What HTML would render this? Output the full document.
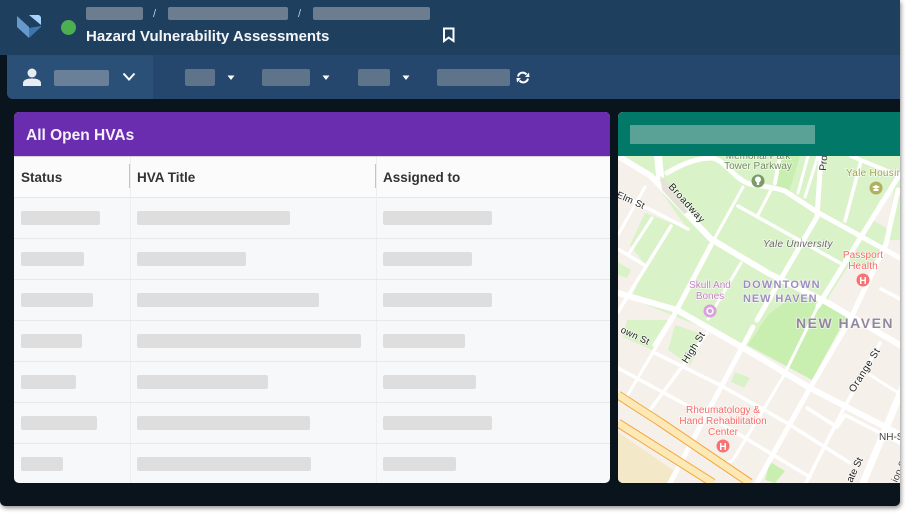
<!DOCTYPE html>
<html>
<head>
<meta charset="utf-8">
<style>
html,body{margin:0;padding:0;width:908px;height:514px;background:#fff;overflow:hidden;font-family:"Liberation Sans",sans-serif}
div{position:absolute;box-sizing:border-box}
#frame{left:0;top:0;width:900px;height:506px;background:#0a141d;border-radius:0 0 5px 5px;box-shadow:1px 2px 5px rgba(0,0,0,.45);overflow:hidden}
#top{left:0;top:0;width:900px;height:55px;background:#1f3f5f}
.crumb{background:#6c7d90;height:13px;top:7px;border-radius:2px}
.sl{top:8px;color:#c5ced8;font-size:11px}
#title{left:86px;top:28px;color:#f4f6f8;font-size:15px;font-weight:bold;white-space:nowrap;letter-spacing:-.02px}
#nav{left:7px;top:55px;width:893px;height:44px;background:#25476d;border-radius:0 0 0 6px}
#usr{left:7px;top:55px;width:146px;height:44px;background:#2a5078;border-radius:0 0 0 6px}
.nb{background:#5f738b;top:69px;height:17px;border-radius:2px}
#pur{left:14px;top:112px;width:596px;height:371px;background:#f7f8fa;border-radius:5px;overflow:hidden}
#ph{left:0;top:0;width:596px;height:44px;background:#6a2db0}
#ph span{position:absolute;left:12px;top:15px;color:#f6f2fb;font-size:15.5px;font-weight:bold;white-space:nowrap}
#th{left:0;top:44px;width:596px;height:42px;background:#fbfbfb;border-top:1px solid #d6d3d9;border-bottom:1px solid #e5e6e8}
.h{top:58px;font-size:13.5px;font-weight:bold;color:#333;white-space:nowrap}
.r{left:0;width:596px;height:1px;background:#e7e8ea}
.v{width:1px;top:45px;height:326px;background:#eceef0}
.vh{width:1px;top:52px;height:24px;background:#c4c4c4}
.b{height:14px;background:#dedede;border-radius:2px}
#grn{left:618px;top:112px;width:282px;height:371px;border-radius:5px 0 0 5px;overflow:hidden;background:#f5f0ea}
#gh{left:0;top:0;width:282px;height:44px;background:#017868}
#gb{left:12px;top:13px;width:185px;height:19px;background:#5aa196}
svg{position:absolute}
</style>
</head>
<body>
<div id="frame">
  <div id="top"></div>
  <svg style="left:0;top:0" width="60" height="55">
    <polygon points="17,16 29,27 29,38 17,27" fill="#6699cc"/>
    <polygon points="29,28 41,26 41,27 29,38" fill="#3f76ab"/>
    <polygon points="29,15 39,15 41,17 41,25" fill="#a6d3fc"/>
  </svg>
  <svg style="left:60px;top:19px" width="18" height="18"><circle cx="8.5" cy="8.5" r="7.5" fill="#4caf50"/></svg>
  <div class="crumb" style="left:86px;width:57px"></div>
  <div class="sl" style="left:153px">/</div>
  <div class="crumb" style="left:168px;width:120px"></div>
  <div class="sl" style="left:298px">/</div>
  <div class="crumb" style="left:313px;width:117px"></div>
  <div id="title">Hazard Vulnerability Assessments</div>
  <svg style="left:442px;top:27px" width="14" height="17"><path d="M2 1.5H11.5V14L6.7 10.6 2 14Z" fill="none" stroke="#fff" stroke-width="2"/></svg>

  <div id="nav"></div>
  <div id="usr"></div>
  <svg style="left:22px;top:67px" width="20" height="20">
    <circle cx="10" cy="6" r="4.5" fill="#e8ecf0"/>
    <path d="M1 19V16.5C1 13 4.5 11.5 10 11.5S19 13 19 16.5V19Z" fill="#e8ecf0"/>
  </svg>
  <div class="nb" style="left:54px;top:70px;width:55px;height:16px;background:#6a8099"></div>
  <svg style="left:122px;top:71px" width="15" height="12"><path d="M1.5 2.5L7 8.5 12.5 2.5" fill="none" stroke="#fff" stroke-width="2"/></svg>
  <div class="nb" style="left:185px;width:30px"></div>
  <svg style="left:227px;top:75px" width="9" height="6"><polygon points="0.5,0.5 7.5,0.5 4,5" fill="#fff"/></svg>
  <div class="nb" style="left:262px;width:48px"></div>
  <svg style="left:322px;top:75px" width="9" height="6"><polygon points="0.5,0.5 7.5,0.5 4,5" fill="#fff"/></svg>
  <div class="nb" style="left:358px;width:32px"></div>
  <svg style="left:402px;top:75px" width="9" height="6"><polygon points="0.5,0.5 7.5,0.5 4,5" fill="#fff"/></svg>
  <div class="nb" style="left:437px;width:73px"></div>
  <svg style="left:516px;top:71px" width="14" height="13">
    <path d="M2 5.5A4.8 4.8 0 0 1 10.5 3.5M12 7.5A4.8 4.8 0 0 1 3.5 9.5" fill="none" stroke="#fff" stroke-width="2"/>
    <polygon points="9,6 13.5,6 13,1.5" fill="#fff"/><polygon points="0.5,7 5,7 1,11.5" fill="#fff"/>
  </svg>

  <div id="pur">
    <div id="ph"><span>All Open HVAs</span></div>
    <div id="th"></div>
    <div class="h" style="left:7px">Status</div>
    <div class="h" style="left:123px">HVA Title</div>
    <div class="h" style="left:369px">Assigned to</div>
    <div class="v" style="left:116px"></div><div class="v" style="left:362px"></div>
    <div class="vh" style="left:115px"></div><div class="vh" style="left:361px"></div>
    <div class="r" style="top:126px"></div><div class="r" style="top:167px"></div><div class="r" style="top:208px"></div>
    <div class="r" style="top:249px"></div><div class="r" style="top:290px"></div><div class="r" style="top:331px"></div>

    <div class="b" style="left:7px;top:99px;width:79px"></div><div class="b" style="left:123px;top:99px;width:153px"></div><div class="b" style="left:369px;top:99px;width:109px"></div>
    <div class="b" style="left:7px;top:140px;width:63px"></div><div class="b" style="left:123px;top:140px;width:109px"></div><div class="b" style="left:369px;top:140px;width:89px"></div>
    <div class="b" style="left:7px;top:181px;width:72px"></div><div class="b" style="left:123px;top:181px;width:182px"></div><div class="b" style="left:369px;top:181px;width:109px"></div>
    <div class="b" style="left:7px;top:222px;width:61px"></div><div class="b" style="left:123px;top:222px;width:224px"></div><div class="b" style="left:369px;top:222px;width:82px"></div>
    <div class="b" style="left:7px;top:263px;width:55px"></div><div class="b" style="left:123px;top:263px;width:131px"></div><div class="b" style="left:369px;top:263px;width:93px"></div>
    <div class="b" style="left:7px;top:304px;width:76px"></div><div class="b" style="left:123px;top:304px;width:173px"></div><div class="b" style="left:369px;top:304px;width:109px"></div>
    <div class="b" style="left:7px;top:345px;width:42px"></div><div class="b" style="left:123px;top:345px;width:174px"></div><div class="b" style="left:369px;top:345px;width:73px"></div>
  </div>

  <div id="grn">
    <svg style="left:0;top:0" width="282" height="371" viewBox="618 112 282 371">
      <rect x="618" y="112" width="282" height="371" fill="#f5f0ea"/>
      <polygon points="655,156 900,156 900,240 888,240 871,268 848,266 825,303 848,314 812,380 750,347 618,293 618,156" fill="#d9f2c8"/>
      <polygon points="618,156 651,176 678,216 688,229 645,213 630,245 646,266 630,300 618,293" fill="#f5f0ea"/>
      <polygon points="618,262 631,270 627,278 618,275" fill="#d9f2c8"/>
      <polygon points="880,200 894,190 888,229 871,219" fill="#f5f0ea"/>
      <polygon points="627,320 670,320 652,350 623,337" fill="#d9f2c8"/>
      <polygon points="675,325 705,335 690,365 668,350" fill="#d9f2c8"/>
      <polygon points="748,345 768,315 797,293 848,314 812,380" fill="#c9efb0"/>
      <polygon points="780,156 800,156 789,192 776,187" fill="#c9efb0"/>
      <polygon points="735,372 750,378 744,388 731,382" fill="#d9f2c8"/>
      <polygon points="770,462 785,471 775,483 765,480" fill="#c9efb0"/>
      <polygon points="618,432 677,473 670,483 618,483" fill="#f3e8c8"/>

      <g fill="none" stroke="#fff" stroke-width="5" stroke-linecap="round" stroke-linejoin="round">
        <path d="M618 156L651 176 711 239 768 273 828 303 900 345" stroke-width="6"/>
        <path d="M658 156L660 176" stroke-width="8"/>
        <path d="M667 173C685 162 700 158 712 158C725 160 735 180 750 184C765 187 775 187 785 191L817 212 900 258"/>
        <path d="M618 293L677 310 747 350 810 388 897 433" stroke-width="6"/>
        <path d="M743 187L711 245" stroke-width="3"/>
        <path d="M711 245L673 317 655 345"/>
        <path d="M757 320L817 217 821 156"/>
        <path d="M900 174L818 306" stroke-width="5"/>
        <path d="M818 306L783 377" stroke-width="3"/>
        <path d="M898 190L886 244 850 320 810 388 757 483"/>
        <path d="M753 327L670 483"/>
        <path d="M851 156L900 176" stroke-width="4"/>
        <path d="M783 377L733 460 727 463" stroke-width="3"/>
        <path d="M618 249L646 266" stroke-width="3.5"/>
        <path d="M672 320L623 403" stroke-width="3"/>
        <path d="M741 263L708 319" stroke-width="3"/>
        <path d="M707 333L650 410" stroke-width="3.5"/>
        <path d="M618 193L688 229" stroke-width="3.5"/>
        <path d="M645 187L618 235" stroke-width="3"/>
        <path d="M652 218L628 255" stroke-width="3"/>
        <path d="M671 226L618 312" stroke-width="3.5"/>
        <path d="M738 206L840 263" stroke-width="3.5"/>
        <path d="M881 289L900 299" stroke-width="3.5"/>
        <path d="M772 188L757 217" stroke-width="3"/>
        <path d="M780 156L775 183" stroke-width="4"/>
        <path d="M808 156L798 193" stroke-width="3"/>
        <path d="M818 156L805 197" stroke-width="3"/>
        <path d="M861 161L845 221" stroke-width="3.5"/>
        <path d="M653 352L720 385 787 423 850 463" stroke-width="3.5"/>
        <path d="M618 368L727 427 770 453 810 477" stroke-width="3.5"/>
        <path d="M807 408L837 427 845 415 900 443" stroke-width="3.5"/>
        <path d="M880 343L843 410 806 483" stroke-width="3.5"/>
        <path d="M903 387L863 483" stroke-width="7"/>
        <path d="M870 375L897 392" stroke-width="3"/>
      </g>
      <polygon points="660,176 666,180 688,212 684,214 662,190" fill="#e5e3d8"/>
      <g fill="none" stroke-linejoin="round">
        <path d="M618 395L660 422 750 483" stroke="#f4a640" stroke-width="9"/>
        <path d="M618 395L660 422 750 483" stroke="#fde9b5" stroke-width="7"/>
        <path d="M618 423L713 483" stroke="#f4a640" stroke-width="9"/>
        <path d="M618 423L713 483" stroke="#fde9b5" stroke-width="7"/>
      </g>
      <g font-family="'Liberation Sans',sans-serif" stroke="#fff" stroke-width="1.5" stroke-opacity=".7" paint-order="stroke">
        <text x="758" y="159" font-size="10" fill="#6f8a5c" text-anchor="middle">Memorial Park</text>
        <text x="758" y="169" font-size="10" fill="#6f8a5c" text-anchor="middle">Tower Parkway</text>
        <circle cx="758" cy="181" r="6.5" fill="#7c9a68" stroke="none"/><rect x="756.8" y="181" width="2.4" height="4" fill="#fff" stroke="none"/><circle cx="758" cy="179.5" r="3" fill="#fff" stroke="none"/>
        <text x="846" y="176" font-size="10" fill="#a0a050" letter-spacing=".3">Yale Housing</text>
        <circle cx="876" cy="188" r="6.5" fill="#b0b060" stroke="none"/><path d="M872 187L876 185 880 187 876 189ZM873.5 189H878.5V191H873.5Z" fill="#fff" stroke="none"/>
        <text transform="translate(826,171) rotate(-85)" font-size="10" fill="#222">Prosp</text>
        <text transform="translate(668,187) rotate(48)" font-size="10" fill="#222" letter-spacing=".6">Broadway</text>
        <text transform="translate(616,197) rotate(24)" font-size="9.5" fill="#222" letter-spacing=".3">Elm St</text>
        <text x="763" y="247" font-size="10" font-style="italic" fill="#666" letter-spacing=".25">Yale University</text>
        <text x="863" y="258" font-size="10" fill="#f76a6a" text-anchor="middle" letter-spacing=".1">Passport</text>
        <text x="863" y="269" font-size="10" fill="#f76a6a" text-anchor="middle" letter-spacing=".1">Health</text>
        <circle cx="863" cy="280" r="6.5" fill="#f77373" stroke="none"/><text x="863" y="284" font-size="10" font-weight="bold" fill="#fff" text-anchor="middle" stroke="none">H</text>
        <text x="710" y="288" font-size="10" fill="#c47fc4" text-anchor="middle">Skull And</text>
        <text x="710" y="299" font-size="10" fill="#c47fc4" text-anchor="middle">Bones</text>
        <circle cx="710" cy="311" r="6.5" fill="#d9a0de" stroke="none"/><circle cx="710" cy="311" r="3" fill="none" stroke="#fff" stroke-width="1.5" stroke-opacity="1"/>
        <text x="743" y="288" font-size="11" font-weight="bold" fill="#9d8dc0" letter-spacing="1.2">DOWNTOWN</text>
        <text x="743" y="302" font-size="11" font-weight="bold" fill="#9d8dc0" letter-spacing=".9">NEW HAVEN</text>
        <text x="796" y="328" font-size="14" font-weight="bold" fill="#93869f" letter-spacing="1.5">NEW HAVEN</text>
        <text transform="translate(620,332) rotate(25)" font-size="9.5" fill="#222" letter-spacing=".3">own St</text>
        <text transform="translate(687,364) rotate(-58)" font-size="10" fill="#222" letter-spacing=".3">High St</text>
        <text transform="translate(854,393) rotate(-58)" font-size="10" fill="#222" letter-spacing=".5">Orange St</text>
        <text x="879" y="440" font-size="10" fill="#444">NH-S</text>
        <text transform="translate(852,483) rotate(-65)" font-size="10" fill="#222">ate St</text>
        <text transform="translate(897,483) rotate(-65)" font-size="10" fill="#444">ion St</text>
        <text x="723" y="413" font-size="10" fill="#f76a6a" text-anchor="middle">Rheumatology &amp;</text>
        <text x="723" y="424" font-size="10" fill="#f76a6a" text-anchor="middle">Hand Rehabilitation</text>
        <text x="723" y="435" font-size="10" fill="#f76a6a" text-anchor="middle">Center</text>
        <circle cx="723" cy="446" r="6.5" fill="#f77373" stroke="none"/><text x="723" y="450" font-size="10" font-weight="bold" fill="#fff" text-anchor="middle" stroke="none">H</text>
      </g>
    </svg>
    <div id="gh"><div id="gb"></div></div>
  </div>
</div>
</body>
</html>
